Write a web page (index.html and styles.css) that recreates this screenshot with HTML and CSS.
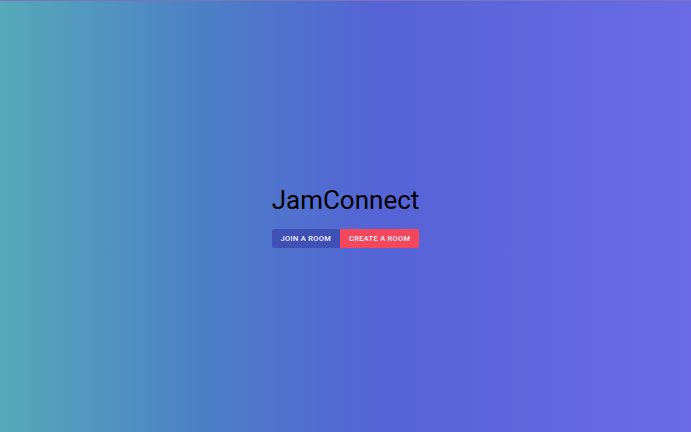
FILE: index.html
```html
<!DOCTYPE html>
<html>
<head>
<meta charset="utf-8">
<link rel="stylesheet" href="styles.css">
</head>
<body>
<main class="page">
  <h1 class="title">JamConnect</h1>
  <div class="actions">
    <button class="btn btn-join">Join a room</button>
    <button class="btn btn-create">Create a room</button>
  </div>
</main>
</body>
</html>
```
FILE: styles.css
```css
html, body {
  margin: 0;
  padding: 0;
  height: 100%;
}
body {
  font-family: Roboto, "Liberation Sans", sans-serif;
}
.page {
  height: 100%;
  box-sizing: border-box;
  border-top: 1px solid #7a74b8;
  background: linear-gradient(to right, #55a9b9 0%, #4c7fc6 30%, #5563d6 55%, #6a6be5 100%);
  display: flex;
  flex-direction: column;
  align-items: center;
  justify-content: center;
}
.title {
  margin: 0 0 14px 0;
  font-size: 26px;
  font-weight: 400;
  line-height: 30px;
  color: #000;
}
.actions {
  display: flex;
}
.btn {
  border: none;
  margin: 0;
  height: 19px;
  padding: 0 9px;
  font-family: Roboto, "Liberation Sans", sans-serif;
  font-size: 7.5px;
  font-weight: 500;
  letter-spacing: 0.3px;
  text-transform: uppercase;
  color: #f4f0ff;
  border-radius: 2px;
}
.btn-join {
  background: #3f51b5;
  border-radius: 2px 0 0 2px;
}
.btn-create {
  background: #f5475b;
  border-radius: 0 2px 2px 0;
}
```
